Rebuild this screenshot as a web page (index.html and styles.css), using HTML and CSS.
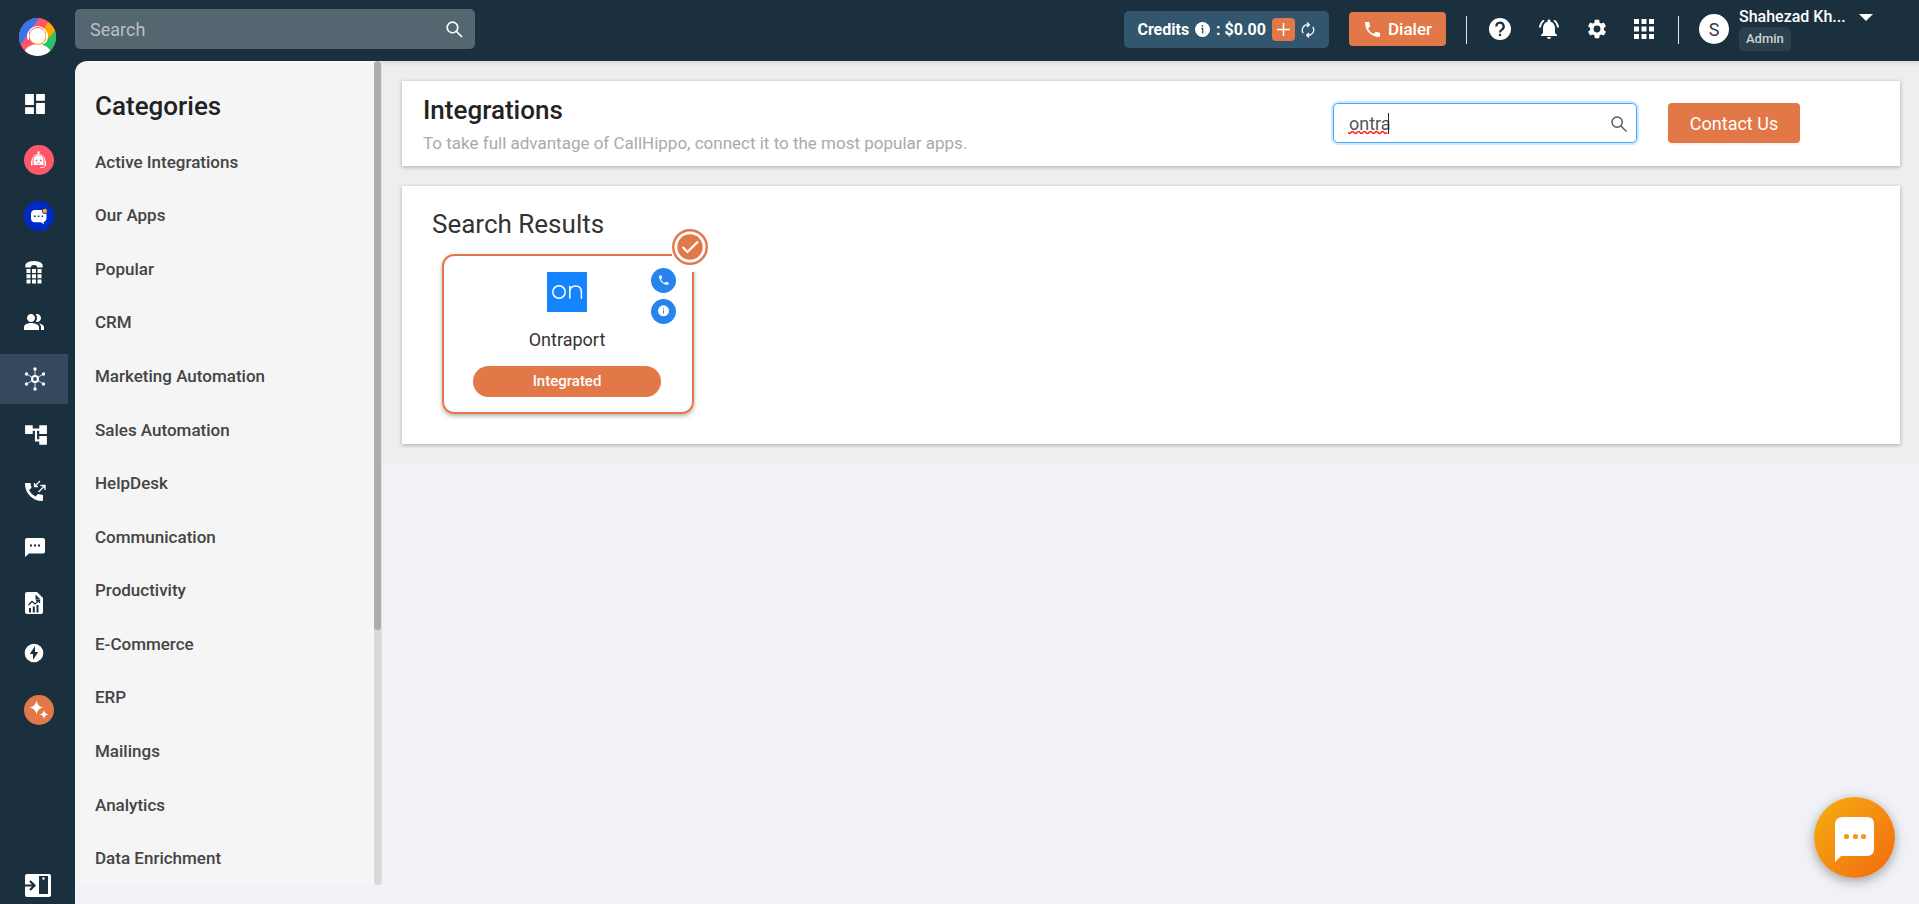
FILE: index.html
```
<!DOCTYPE html>
<html lang="en">
<head>
    <meta charset="UTF-8">
    <meta name="viewport" content="width=device-width, initial-scale=1.0">
    <title>Integrations - CallHippo</title>
    <link rel="stylesheet" href="styles.css">
</head>
<body>
    <nav class="rail" aria-label="Main">
        <a href="#" class="rail-logo" aria-label="Home">
            <svg width="37" height="38" viewBox="0 0 37 38">
                <defs><clipPath id="logoClip"><ellipse cx="18.5" cy="19" rx="18.5" ry="19"/></clipPath></defs>
                <g clip-path="url(#logoClip)">
                    <path fill="#ff5768" d="M0 0h37v38H0z"/>
                    <path fill="#3b73e8" d="M0 0h20L1 28H0z"/>
                    <path fill="#ffa800" d="M29 4l8 8v3L20 32 17 26z"/>
                    <path fill="#27c26c" d="M37 12v26H22l-2-8z"/>
                    <ellipse cx="18.5" cy="35" rx="13" ry="9" fill="#fff"/>
                    <circle cx="18.5" cy="18" r="8" fill="#fff"/>
                    <path d="M9 18a9.5 9.5 0 0 1 19 0M28 20c0 5-4 6-8 6" fill="none" stroke="#fff" stroke-width="1.2"/>
                    <path d="M10 14h-1q-2 4 0 8h1zM27 14h1q2 4 0 8h-1z" fill="#fff"/>
                    <path d="M14 25q5 3 10 0" fill="none" stroke="#ffa800"/>
                </g>
            </svg>
        </a>
        <a href="#" class="rail-item" aria-label="Dashboard">
            <svg width="22" height="22" viewBox="2 2 20 20"><path fill="currentColor" d="M3 13h8V3H3zm0 8h8v-6H3zm10 0h8V11h-8zm0-18v6h8V3z"/></svg>
        </a>
        <a href="#" class="rail-item" aria-label="Voice bot">
            <svg width="30" height="30" viewBox="0 0 30 30">
                <circle cx="15" cy="15" r="15" fill="#ff5768"/>
                <path d="M14.5 7v4" stroke="#fff"/><circle cx="14.5" cy="7.5" r="1.2" fill="#fff"/>
                <path fill="#fff" d="M9.5 20v-5a5 4.5 0 0 1 10 0v5zM7 16h1.5v4.5H7zM20.5 16H22v4.5h-1.5z"/>
                <path d="M8 16a6.5 6.5 0 0 1 13 0M21.5 20q0 2.5-5 2.5" fill="none" stroke="#fff"/>
                <circle cx="12.5" cy="15.5" r=".9" fill="#ff5768"/><circle cx="16.8" cy="15.5" r=".9" fill="#ff5768"/>
                <path d="M13 18q1.6 1 3 0" fill="none" stroke="#ff5768" stroke-width=".8"/>
            </svg>
        </a>
        <a href="#" class="rail-item" aria-label="Chat bot">
            <svg width="30" height="30" viewBox="0 0 30 30">
                <circle cx="15" cy="15" r="15" fill="#0029c9"/>
                <path fill="#fff" d="M11 9h7q4.5 0 4.5 4.500V17q0 3-3 4l.5 2.500-3-2.200H11Q7 21.300 7 17v-4q0-4 4-4z"/>
                <circle cx="20.8" cy="10" r="2.9" fill="#0029c9"/><circle cx="20.8" cy="10" r="2.3" fill="#ffa800"/>
                <path fill="#0029c9" d="M10 14.5h1.6v1.6H10zM13.8 14.5h1.6v1.6h-1.6zM17.6 14.5h1.6v1.6h-1.6z"/>
            </svg>
        </a>
        <a href="#" class="rail-item" aria-label="Numbers">
            <svg width="20" height="24" viewBox="0 0 20 24">
                <path fill="currentColor" d="M1.5 7.5Q0 1 10 1t8.5 6.500H13q.5-2.500-3-2.500T7 7.500z"/>
                <path fill="currentColor" d="M2.5 9h4v4h-4zM8 9h4v4H8zM13.5 9h4v4h-4zM2.5 14.2h4v4h-4zM8 14.2h4v4H8zM13.5 14.2h4v4h-4zM2.5 19.4h4v4h-4zM8 19.4h4v4H8zM13.5 19.4h4v4h-4z"/>
            </svg>
        </a>
        <a href="#" class="rail-item compact" aria-label="Users">
            <svg width="20" height="20" viewBox="2 2 20 20"><path fill="currentColor" d="M16.700 13.130C18.040 14.060 19 15.320 19 17v3h3v-3c0-2.180-3.570-3.470-5.300-3.870M15 12c2.210 0 4-1.790 4-4s-1.790-4-4-4c-.47 0-.91.100-1.330.240C14.500 5.270 15 6.580 15 8s-.5 2.730-1.330 3.760c.42.140.86.240 1.330.240M9 12c2.210 0 4-1.790 4-4s-1.790-4-4-4-4 1.790-4 4 1.790 4 4 4m0 1c-2.670 0-7 1.340-7 4v3h15v-3c0-2.660-5.330-4-8-4"/></svg>
        </a>
        <a href="#" class="rail-item active" aria-label="Integrations" aria-current="page">
            <svg width="22" height="24" viewBox="0 0 22 24">
                <path d="M11 2v20M2.5 7l17 10M19.5 7l-17 10" stroke="#fff" stroke-width=".8"/>
                <circle cx="11" cy="12" r="4" fill="#fff"/><circle cx="11" cy="12" r="1.9" fill="#34495e"/>
                <g fill="#fff"><circle cx="11" cy="2" r="1.7"/><circle cx="11" cy="22" r="1.7"/><circle cx="2.5" cy="7" r="1.7"/><circle cx="19.5" cy="7" r="1.7"/><circle cx="2.5" cy="17" r="1.7"/><circle cx="19.5" cy="17" r="1.7"/></g>
            </svg>
        </a>
        <a href="#" class="rail-item" aria-label="Call flow">
            <svg width="24" height="24" viewBox="1 1 22 22"><path fill="currentColor" d="M22 11V3h-7v3H9V3H2v8h7V8h2v10h4v3h7v-8h-7v3h-2V8h2v3z"/></svg>
        </a>
        <a href="#" class="rail-item" aria-label="Call logs">
            <svg width="22" height="22" viewBox="0 0 22 22">
                <path fill="currentColor" d="M1 3h5q.6 0 .7.700.2 2 .8 3.500.1.500-.2.900L5 10.200a15 15 0 0 0 6.500 6.300l2.200-2.200q.4-.4.900-.2 1.800.5 3.600.6.800.1.800.9V20q0 1-1 1A17 17 0 0 1 1 4z"/>
                <path d="M16 1l-5 5M10.5 3v3.5H14M14.5 12l6-6M16.5 5.5H21V10" fill="none" stroke="currentColor" stroke-width="1.3"/>
            </svg>
        </a>
        <a href="#" class="rail-item" aria-label="Messages">
            <svg width="22" height="22" viewBox="1 1 22 22"><path fill="currentColor" d="M20 3H4a2 2 0 0 0-2 2v17l4-3.500h14a2 2 0 0 0 2-2V5a2 2 0 0 0-2-2M9 11.500H7v-2h2zm4 0h-2v-2h2zm4 0h-2v-2h2z"/></svg>
        </a>
        <a href="#" class="rail-item" aria-label="Reports">
            <svg width="20" height="24" viewBox="0 0 20 24">
                <path fill="currentColor" d="M3 1h10l6 6v14q0 2-2 2H3q-2 0-2-2V3q0-2 2-2z"/>
                <path d="M11.5 3.5l5 5h-5z" fill="#1b303e"/>
                <path d="M4.5 14l3.5-3.5 3 2.5 4-3.5M12 9.500h3.500V12" fill="none" stroke="#1b303e" stroke-width="1.3"/>
                <path d="M5 17h2v4.500H5zM8.800 15.500h2v6h-2zM12.500 14h2v7.500h-2z" fill="#1b303e"/>
            </svg>
        </a>
        <a href="#" class="rail-item compact" aria-label="Power dialer">
            <svg width="20" height="20" viewBox="0 0 20 20"><circle cx="10" cy="10" r="9.3" fill="#fff"/><path fill="#1b303e" d="M11 3L5.800 11H9v6l5.200-8H11z"/></svg>
        </a>
        <a href="#" class="rail-item" aria-label="AI features">
            <svg width="30" height="30" viewBox="0 0 30 30">
                <circle cx="15" cy="15" r="15" fill="#e27748"/>
                <path fill="#fff" d="M12.500 5.500q1 6 6.500 7-5.500 1-6.500 7-1-6-7-7 6-1 7-7zM20 15q.6 3.800 4.300 4.500-3.700.7-4.300 4.500-.6-3.800-4.300-4.500Q19.400 18.800 20 15z"/>
            </svg>
        </a>
        <button type="button" class="rail-toggle" aria-label="Expand menu">
            <svg width="28" height="24" viewBox="0 0 28 24">
                <rect x="1" y="1" width="26" height="23" rx="2" fill="#fff"/>
                <rect x="15" y="3" width="9" height="18" fill="#1b303e"/><circle cx="19.5" cy="5.5" r="1.2" fill="#fff"/>
                <path d="M0 12.500h9M6 8l4.500 4.500L6 17" fill="none" stroke="#1b303e" stroke-width="2.2"/>
            </svg>
        </button>
    </nav>

    <div class="page">
        <header class="topbar">
            <form class="global-search">
                <input type="text" id="globalSearch" placeholder="Search" aria-label="Search">
                <button type="button" aria-label="Run search">
                    <svg width="17" height="17" viewBox="0 0 17 17" fill="none" stroke="currentColor" stroke-width="1.7"><circle cx="6.5" cy="6.5" r="5.3"/><path d="M10.500 10.500l5.500 5.500"/></svg>
                </button>
            </form>

            <div class="credits">
                <span>Credits</span>
                <svg width="15" height="15" viewBox="0 0 15 15"><circle cx="7.5" cy="7.5" r="7.5" fill="#fff"/><path d="M6.200 6.500h1.500v5M7.500 3v1.800" stroke="#31566d" stroke-width="1.3" fill="none"/></svg>
                <span>: $0.00</span>
                <button type="button" class="credits-add" aria-label="Add credits">
                    <svg width="13" height="13" viewBox="0 0 13 13"><path d="M6.500 0v13M0 6.500h13" stroke="#fff" stroke-width="1.5"/></svg>
                </button>
                <button type="button" class="credits-refresh" aria-label="Refresh credits">
                    <svg width="14" height="16" viewBox="0 0 14 16" fill="none" stroke="#fff" stroke-width="1.3"><path d="M2.200 11.200A5.500 5.500 0 0 1 7 2.700h1M6 .5l2.300 2.200L6 5M11.800 4.800A5.500 5.500 0 0 1 7 13.300H6M8 11l-2.300 2.300L8 15.500"/></svg>
                </button>
            </div>

            <button type="button" class="dialer">
                <svg width="15" height="15" viewBox="3 3 18 18"><path fill="currentColor" d="M3 4c0 9.390 7.610 17 17 17 .55 0 1-.45 1-1v-3.490c0-.55-.45-1-1-1-1.240 0-2.450-.2-3.570-.57a1 1 0 0 0-1.020.240l-2.200 2.200a15.100 15.100 0 0 1-6.590-6.590l2.200-2.210a.96.960 0 0 0 .250-1A11.400 11.400 0 0 1 8.500 4c0-.55-.45-1-1-1H4c-.55 0-1 .45-1 1"/></svg>
                Dialer
            </button>

            <span class="divider"></span>
            <div class="top-icons">
                <button type="button" aria-label="Help">
                    <svg width="22" height="22" viewBox="0 0 22 22"><circle cx="11" cy="11" r="11" fill="#fff"/><path d="M7.300 8.500a3.700 3.700 0 1 1 5.600 3.100Q11 12.800 11 14.500" fill="none" stroke="#1b303e" stroke-width="2.2"/><path fill="#1b303e" d="M9.900 15.800h2.200V18H9.900z"/></svg>
                </button>
                <button type="button" aria-label="Notifications">
                    <svg width="22" height="22" viewBox="1 1 22 22"><path fill="currentColor" d="M7.580 4.080L6.150 2.650C3.750 4.480 2.170 7.300 2.030 10.500h2c.15-2.650 1.510-4.970 3.550-6.420m12.390 6.420h2c-.15-3.200-1.730-6.020-4.120-7.850l-1.420 1.430c2.020 1.450 3.390 3.770 3.540 6.420M18 11c0-3.070-1.640-5.640-4.500-6.320V4c0-.83-.67-1.500-1.500-1.500s-1.500.67-1.500 1.500v.68C7.630 5.360 6 7.920 6 11v5l-2 2v1h16v-1l-2-2zm-6 11c1.100 0 2-.9 2-2h-4c0 1.100.9 2 2 2"/></svg>
                </button>
                <button type="button" aria-label="Settings">
                    <svg width="20" height="20" viewBox="1.5 1.5 21 21"><path fill="currentColor" d="M19.140 12.940c.04-.3.060-.61.060-.94 0-.32-.02-.64-.07-.94l2.030-1.580a.49.490 0 0 0 .12-.61l-1.920-3.320a.488.488 0 0 0-.59-.22l-2.390.960a7 7 0 0 0-1.620-.94l-.36-2.540a.48.480 0 0 0-.48-.41h-3.840c-.24 0-.43.170-.47.410l-.36 2.540c-.59.240-1.130.570-1.620.940l-2.390-.96a.48.480 0 0 0-.59.220L2.740 8.870c-.12.210-.08.470.12.610l2.030 1.580c-.05.300-.09.630-.09.940s.02.640.07.940l-2.030 1.580a.49.490 0 0 0-.12.610l1.920 3.320c.12.220.37.290.59.220l2.390-.96c.5.380 1.030.700 1.620.940l.36 2.540c.05.240.240.410.480.410h3.840c.24 0 .44-.17.470-.41l.36-2.540a7 7 0 0 0 1.620-.94l2.390.960c.22.080.470 0 .59-.22l1.920-3.320a.47.470 0 0 0-.12-.61zM12 15.600A3.600 3.600 0 1 1 12 8.400a3.600 3.600 0 0 1 0 7.200"/></svg>
                </button>
                <button type="button" aria-label="Apps">
                    <svg width="20" height="20" viewBox="0 0 20 20"><path fill="currentColor" d="M0 0h5v5H0zM7.500 0h5v5h-5zM15 0h5v5h-5zM0 7.500h5v5H0zM7.500 7.500h5v5h-5zM15 7.500h5v5h-5zM0 15h5v5H0zM7.500 15h5v5h-5zM15 15h5v5h-5z"/></svg>
                </button>
            </div>
            <span class="divider"></span>

            <div class="profile">
                <span class="avatar">S</span>
                <div class="profile-info">
                    <span class="profile-name">Shahezad Kh...</span>
                    <span class="profile-role">Admin</span>
                </div>
                <button type="button" class="profile-caret" aria-label="Open profile menu">
                    <svg width="14" height="7" viewBox="0 0 14 7"><path fill="currentColor" d="M0 0h14L7 7z"/></svg>
                </button>
            </div>
        </header>

        <div class="body-row">
            <aside class="categories">
                <div class="categories-list">
                    <h2>Categories</h2>
                    <ul>
                        <li><a href="#">Active Integrations</a></li>
                        <li><a href="#">Our Apps</a></li>
                        <li><a href="#">Popular</a></li>
                        <li><a href="#">CRM</a></li>
                        <li><a href="#">Marketing Automation</a></li>
                        <li><a href="#">Sales Automation</a></li>
                        <li><a href="#">HelpDesk</a></li>
                        <li><a href="#">Communication</a></li>
                        <li><a href="#">Productivity</a></li>
                        <li><a href="#">E-Commerce</a></li>
                        <li><a href="#">ERP</a></li>
                        <li><a href="#">Mailings</a></li>
                        <li><a href="#">Analytics</a></li>
                        <li><a href="#">Data Enrichment</a></li>
                    </ul>
                </div>
                <div class="scroll-track"><div class="scroll-thumb"></div></div>
            </aside>

            <main class="content">
                <section class="panel panel-head">
                    <div class="panel-title">
                        <h1>Integrations</h1>
                        <p>To take full advantage of CallHippo, connect it to the most popular apps.</p>
                    </div>
                    <div class="app-search">
                        <input type="text" id="appSearch" value="ontra" aria-label="Search integrations">
                        <svg class="app-search-mark" width="42" height="22" viewBox="0 0 42 22" fill="none">
                            <path d="M0 19.500q1.500 2 3 0t3 0 3 0 3 0 3 0 3 0 3 0 3 0 3 0 3 0 3 0 3 0 3 0" stroke="#f22" stroke-width="1.3"/>
                            <path d="M40.500 0v21" stroke="#222"/>
                        </svg>
                        <svg class="app-search-icon" width="16" height="16" viewBox="0 0 17 17" fill="none" stroke="currentColor" stroke-width="1.5"><circle cx="6.5" cy="6.5" r="5.5"/><path d="M10.500 10.500l6 6"/></svg>
                    </div>
                    <button type="button" class="contact">Contact Us</button>
                </section>

                <section class="panel panel-results">
                    <h2>Search Results</h2>
                    <article class="app-card">
                        <span class="app-check">
                            <svg width="36" height="36" viewBox="0 0 36 36"><circle cx="18" cy="18" r="16.8" fill="#fff" stroke="#e27748" stroke-width="2.4"/><circle cx="18" cy="18" r="12.7" fill="#e27748"/><path d="M10.500 18l5 5L26 12.500" fill="none" stroke="#fff" stroke-width="2.2"/></svg>
                        </span>
                        <div class="app-tags">
                            <svg width="25" height="25" viewBox="0 0 25 25"><circle cx="12.5" cy="12.5" r="12.5" fill="#2684ef"/><path fill="#fff" d="M8 7.500h2.500l.6 2.800-1.300 1.200q1.200 2.400 3.600 3.600l1.300-1.300 2.800.6V17Q8 16.500 8 7.500z"/></svg>
                            <svg width="25" height="25" viewBox="0 0 25 25"><circle cx="12.5" cy="12.5" r="12.5" fill="#2684ef"/><circle cx="12.5" cy="11.8" r="5.5" fill="#fff"/><path d="M12.500 9v1.200M12.500 11.200v3.300" stroke="#2684ef"/></svg>
                        </div>
                        <div class="app-logo">
                            <svg width="40" height="40" viewBox="0 0 40 40" fill="none" stroke="#fff" stroke-width="1.5"><circle cx="12" cy="20" r="6.2"/><path d="M22.800 26.700V13.800M22.800 20q0-6 5.800-6t5.800 6v6.700"/></svg>
                        </div>
                        <h3>Ontraport</h3>
                        <button type="button" class="integrated">Integrated</button>
                    </article>
                </section>
            </main>
        </div>
    </div>

    <button type="button" class="chat-launcher" aria-label="Open chat">
        <svg width="40" height="46" viewBox="0 0 40 46"><path fill="#fff" d="M8 0h24q7 0 7 7v25q0 7-7 7H6l-6 6V8q0-8 8-8z"/><g fill="#f39a13"><circle cx="11.5" cy="19.5" r="2.6"/><circle cx="20.5" cy="19.5" r="2.6"/><circle cx="28.5" cy="19.5" r="2.6"/></g></svg>
    </button>
</body>
</html>
```

FILE: styles.css
```
* {
    box-sizing: border-box;
}

body {
    margin: 0;
    min-height: 100vh;
    display: flex;
    background-color: #f0f2f7;
    font-family: Roboto, "Liberation Sans", sans-serif;
    color: #333;
}

h1, h2, h3, p, ul {
    margin: 0;
    padding: 0;
}

button {
    font-family: inherit;
    border: none;
    background: none;
    padding: 0;
    cursor: pointer;
}

svg {
    display: block;
}

/* left rail */
.rail {
    width: 75px;
    flex-shrink: 0;
    height: 100vh;
    display: flex;
    flex-direction: column;
    gap: 6px;
    background-color: #1b303e;
    color: #fff;
}

.rail-logo {
    padding: 18px 0 17px 19px;
}

.rail-item {
    width: 68px;
    height: 50px;
    flex-shrink: 0;
    display: flex;
    align-items: center;
    padding-left: 24px;
    color: #fff;
}

.rail-item.compact {
    height: 38px;
    margin-bottom: 7px;
}

.rail-item.active {
    background-color: #34495e;
}

.rail-toggle {
    margin-top: auto;
    padding: 0 0 7px 24px;
}

/* top bar */
.page {
    flex: 1;
    min-width: 0;
    height: 100vh;
    display: flex;
    flex-direction: column;
    background-color: #f0f2f7;
}

.topbar {
    height: 61px;
    flex-shrink: 0;
    display: flex;
    align-items: flex-start;
    padding: 9px 46px 0 0;
    background-color: #1b303e;
    color: #fff;
}

.global-search {
    width: 400px;
    height: 40px;
    display: flex;
    align-items: center;
    margin-right: auto;
    padding: 0 12px 0 15px;
    border-radius: 5px;
    background-color: #546670;
}

.global-search input {
    flex: 1;
    min-width: 0;
    padding: 0;
    border: none;
    outline: none;
    background: none;
    color: #fff;
    font: 18px Roboto, sans-serif;
}

.global-search input::placeholder {
    color: #b9bfc3;
}

.global-search button {
    color: #fff;
}

.credits {
    height: 37px;
    margin-top: 2px;
    display: flex;
    align-items: center;
    gap: 6px;
    padding: 0 14px 0 13px;
    border-radius: 5px;
    background-color: #31566d;
    font-size: 16px;
    font-weight: 700;
}

.credits-add {
    width: 23px;
    height: 23px;
    display: grid;
    place-items: center;
    border-radius: 4px;
    background-color: #e27748;
}

.dialer {
    height: 34px;
    margin: 3px 20px 0;
    padding: 0 14px 0 16px;
    display: flex;
    align-items: center;
    gap: 8px;
    border-radius: 4px;
    background-color: #e27748;
    color: #fff;
    font-size: 17px;
    font-weight: 500;
}

.divider {
    width: 1px;
    height: 28px;
    margin-top: 7px;
    background-color: #e6e9eb;
}

.top-icons {
    height: 40px;
    display: flex;
    align-items: center;
    gap: 27px;
    padding: 0 24px 0 22px;
}

.top-icons button {
    color: #fff;
}

.profile {
    display: flex;
    align-items: flex-start;
    margin-left: 20px;
}

.avatar {
    width: 30px;
    height: 30px;
    margin: 5px 10px 0 0;
    display: grid;
    place-items: center;
    border-radius: 50%;
    background-color: #fff;
    color: #34384a;
    font-size: 18px;
}

.profile-info {
    width: 104px;
    margin-top: -2px;
    display: flex;
    flex-direction: column;
    align-items: flex-start;
}

.profile-name {
    white-space: nowrap;
    font-size: 16px;
    line-height: 20px;
    font-weight: 500;
}

.profile-role {
    padding: 0 7px;
    border-radius: 5px;
    background-color: #2b404d;
    color: #ccd2d6;
    font-size: 13px;
    line-height: 24px;
    font-weight: 500;
}

.profile-caret {
    margin: 5px 0 0 16px;
    color: #fff;
}

/* categories */
.body-row {
    flex: 1;
    min-height: 0;
    display: flex;
    align-items: flex-start;
    background: linear-gradient(#1b303e, #1b303e) top left / 12px 12px no-repeat;
}

.categories {
    width: 307px;
    height: calc(100% - 19px);
    flex-shrink: 0;
    display: flex;
    border-radius: 12px 0 0 0;
    background-color: #f5f5f5;
    border-right: 1px solid #e2e2e2;
    overflow: hidden;
}

.categories-list {
    flex: 1;
    padding: 29px 20px 0;
    overflow: hidden;
}

.categories h2 {
    font-size: 26px;
    line-height: 32px;
    font-weight: 500;
    color: #222;
}

.categories ul {
    list-style: none;
    display: grid;
    grid-auto-rows: 1fr;
    height: 763px;
    padding-top: 13px;
}

.categories li {
    display: flex;
    align-items: center;
}

.categories li a {
    color: #444;
    font-size: 17px;
    font-weight: 500;
    text-decoration: none;
}

.scroll-track {
    width: 7px;
    border-radius: 4px;
    background-color: #d8d8d8;
}

.scroll-thumb {
    height: 69%;
    border-radius: 4px;
    background-color: #adadad;
}

/* content */
.content {
    flex: 1;
    min-width: 0;
    display: flex;
    flex-direction: column;
    gap: 20px;
    padding: 20px 19px 19px 20px;
    background-color: #eee;
    box-shadow: inset 0 5px 4px -3px rgba(0, 0, 0, 0.1);
}

.panel {
    background-color: #fff;
    box-shadow: 0 1px 4px rgba(0, 0, 0, 0.3);
}

.panel-head {
    display: flex;
    align-items: center;
    padding: 12px 100px 13px 21px;
}

.panel-title {
    margin-right: auto;
}

.panel-title h1 {
    font-size: 26px;
    line-height: 34px;
    font-weight: 500;
    color: #222;
}

.panel-title p {
    margin-top: 6px;
    font-size: 17px;
    line-height: 20px;
    color: #aaa;
}

.app-search {
    position: relative;
    width: 304px;
    margin-right: 31px;
}

.app-search input {
    width: 100%;
    height: 40px;
    display: block;
    padding: 0 40px 0 15px;
    border: 1px solid #40a9ff;
    border-radius: 5px;
    outline: none;
    box-shadow: 0 0 0 2px rgba(24, 144, 255, 0.2);
    color: #555;
    font: 18px Roboto, sans-serif;
}

.app-search-mark {
    position: absolute;
    left: 15px;
    top: 10px;
}

.app-search-icon {
    position: absolute;
    right: 10px;
    top: 13px;
    color: #555;
}

.contact {
    width: 132px;
    height: 40px;
    border-radius: 4px;
    background-color: #e27748;
    color: #fff;
    font-size: 18px;
    box-shadow: 0 2px 2px rgba(0, 0, 0, 0.05);
}

.panel-results {
    padding: 22px 40px 30px;
}

.panel-results h2 {
    margin-left: -10px;
    font-size: 26px;
    line-height: 32px;
    font-weight: 400;
}

.app-card {
    position: relative;
    width: 252px;
    margin-top: 14px;
    padding: 16px 30px 15px 28px;
    display: flex;
    flex-direction: column;
    align-items: center;
    border: 2px solid #e27748;
    border-radius: 12px;
    box-shadow: 0 2px 4px rgba(0, 0, 0, 0.3);
}

/* the white block hides the card corner behind the tick */
.app-check {
    position: absolute;
    top: -29px;
    right: -20px;
    padding: 2px 4px 7px 0;
    background-color: #fff;
}

.app-tags {
    position: absolute;
    top: 12px;
    right: 16px;
    display: grid;
    gap: 6px;
}

.app-logo {
    background-color: #1485ff;
}

.app-card h3 {
    margin: 16px 0 14px;
    font-size: 18px;
    line-height: 24px;
    font-weight: 400;
}

.integrated {
    width: 188px;
    height: 31px;
    padding-bottom: 2px;
    border-radius: 16px;
    background-color: #e27748;
    color: #fff;
    font-size: 15px;
    font-weight: 500;
}

.chat-launcher {
    position: fixed;
    right: 24px;
    bottom: 26px;
    width: 81px;
    height: 81px;
    padding-top: 5px;
    display: grid;
    place-items: center;
    border-radius: 50%;
    background: linear-gradient(135deg, #f4b012, #f4690f);
    box-shadow: 0 3px 12px rgba(0, 0, 0, 0.35);
}
```
